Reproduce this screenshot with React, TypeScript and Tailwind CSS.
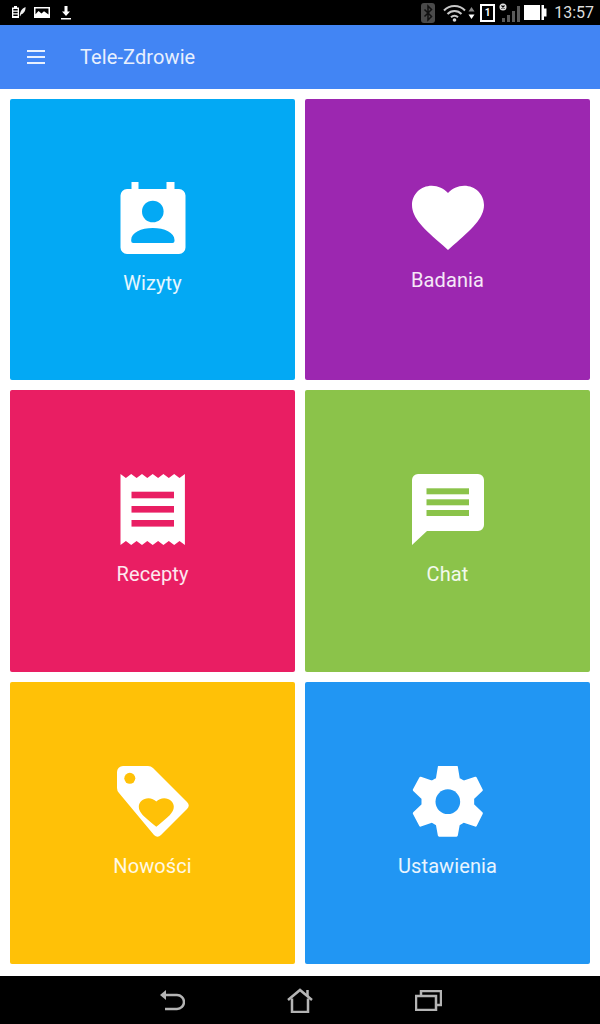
const HEART =
  "M12 21.35l-1.45-1.32C5.4 15.36 2 12.28 2 8.5 2 5.42 4.42 3 7.5 3c1.74 0 3.41.81 4.5 2.09C13.09 3.81 14.76 3 16.5 3 19.58 3 22 5.42 22 8.5c0 3.78-3.4 6.86-8.55 11.54L12 21.35z";

function TileIcon({ children }: { children: React.ReactNode }) {
  return (
    <svg width="72" height="72" viewBox="0 0 72 72" className="block shrink-0">
      {children}
    </svg>
  );
}

function ContactIcon() {
  return (
    <TileIcon>
      <path
        fill="#fff"
        d="M14.500 0h7v7h28V0h8v7H62a6.500 6.500 0 0 1 6.500 6.500v52A6.500 6.500 0 0 1 62 72H10a6.500 6.500 0 0 1-6.500-6.500v-52A6.500 6.500 0 0 1 10 7h4.500z"
      />
      <circle cx="35.800" cy="29.500" r="10.800" fill="#03a9f4" />
      <path
        fill="#03a9f4"
        d="M14.200 58c0-7.500 10-12 21.600-12s21.700 4.500 21.700 12v1a2 2 0 0 1-2 2H16.200a2 2 0 0 1-2-2z"
      />
    </TileIcon>
  );
}

function HeartIcon() {
  return (
    <TileIcon>
      <path fill="#fff" transform="translate(-7.200,-4.800) scale(3.600,3.500)" d={HEART} />
    </TileIcon>
  );
}

function ReceiptIcon() {
  return (
    <TileIcon>
      <path
        fill="#fff"
        d="M3.500 0l5.400 4 5.300-4 5.400 4 5.400-4 5.300 4 5.400-4 5.400 4 5.300-4 5.400 4 5.400-4 5.300 4 5.400-4v71l-5.400-4-5.300 4-5.400-4-5.400 4-5.300-4-5.400 4-5.400-4-5.300 4-5.400-4-5.400 4-5.300-4-5.400 4z"
      />
      <rect x="14.500" y="17.700" width="42.500" height="6.600" fill="#e91e63" />
      <rect x="14.500" y="32" width="42.500" height="6.600" fill="#e91e63" />
      <rect x="14.500" y="46" width="42.500" height="6.600" fill="#e91e63" />
    </TileIcon>
  );
}

function ChatIcon() {
  return (
    <TileIcon>
      <path
        fill="#fff"
        d="M6 0h60a6 6 0 0 1 6 6v45a6 6 0 0 1-6 6H15L0 71V6a6 6 0 0 1 6-6z"
      />
      <rect x="14.500" y="14.300" width="42.500" height="6" fill="#8bc34a" />
      <rect x="14.500" y="25.300" width="42.500" height="6" fill="#8bc34a" />
      <rect x="14.500" y="36" width="42.500" height="6" fill="#8bc34a" />
    </TileIcon>
  );
}

function TagIcon() {
  return (
    <TileIcon>
      <path
        fill="#fff"
        d="M6 0h25q3 0 5 2l34 34q3.500 3.500 0 7L44 69q-3.500 3.500-7 0L2 27q-2-2-2-5V6a6 6 0 0 1 6-6z"
      />
      <circle cx="12.800" cy="12.300" r="5.500" fill="#ffc107" />
      <path fill="#ffc107" transform="translate(18.300,27.650) scale(1.750,1.550)" d={HEART} />
    </TileIcon>
  );
}

function GearIcon() {
  return (
    <TileIcon>
      <g transform="translate(-16.500,-11) scale(0.3333)">
        <polygon
          fill="#fff"
          stroke="#fff"
          strokeWidth="8"
          strokeLinejoin="round"
          points="131,36 183,36 189,72 204,81 240,69 258,105 232,130 232,150 258,175 240,211 204,199 189,208 183,241 131,241 125,208 110,199 75,211 56,175 82,150 82,130 56,105 75,69 110,81 125,72"
        />
        <circle cx="157" cy="140" r="37" fill="#2196f3" />
      </g>
    </TileIcon>
  );
}

const tiles = [
  { label: "Wizyty", bg: "bg-[#03a9f4]", icon: <ContactIcon />, pad: "pb-[2px]", gap: "mt-[17px]" },
  { label: "Badania", bg: "bg-[#9c27b0]", icon: <HeartIcon />, pad: "pb-[7px]", gap: "mt-[16px]" },
  { label: "Recepty", bg: "bg-[#e91e63]", icon: <ReceiptIcon />, pad: "pb-[2px]", gap: "mt-[16px]" },
  { label: "Chat", bg: "bg-[#8bc34a]", icon: <ChatIcon />, pad: "pb-[2px]", gap: "mt-[16px]" },
  { label: "Nowości", bg: "bg-[#ffc107]", icon: <TagIcon />, pad: "pb-[2px]", gap: "mt-[16px]" },
  { label: "Ustawienia", bg: "bg-[#2196f3]", icon: <GearIcon />, pad: "pb-[2px]", gap: "mt-[16px]" },
];

function StatusBar() {
  return (
    <div className="flex h-[25px] items-center bg-black pl-[11px] pr-[6px]">
      {/* notification icons */}
      <svg width="15" height="13" viewBox="0 0 15 13" className="block">
        <path
          fill="#fff"
          fillRule="evenodd"
          d="M3 0h3v1.500h2V12H1V1.500h2zM2.300 3v1.500h4.400V3zm0 2.800v1.500h4.400V5.800zm0 2.800v1.500h4.400V8.600z"
        />
        <path fill="#eee" d="M14.500 1c.3 3.500-1.500 6.500-4.500 7.500l-.7 1.800-.5-.3C9 6 10.500 2.500 14.500 1z" />
      </svg>
      <svg width="16" height="11" viewBox="0 0 16 11" className="ml-[8px] block">
        <path
          fill="#fff"
          fillRule="evenodd"
          d="M0 0h16v11H0zM1.500 1.500v5.800L4.500 4l3 2.500L10 4.200l4.500 3.300v-6z"
        />
      </svg>
      <svg width="12" height="14" viewBox="0 0 12 14" className="ml-[10px] block">
        <path fill="#fff" d="M4.500 0h3v5.500H10L6 10 2 5.500h2.500zM1 12h10v1.500H1z" />
      </svg>

      {/* system icons */}
      <div className="ml-auto flex items-center">
        <svg width="14" height="20" viewBox="0 0 14 20" className="block">
          <rect width="14" height="20" rx="3" fill="#4a4a4a" />
          <path fill="none" stroke="#111" strokeWidth="1.500" d="M3.500 6.500l7 7L7 17V3l3.500 3.500-7 7" />
        </svg>
        <svg width="23" height="18" viewBox="0 0 23 18" className="ml-[8px] block">
          <path
            fill="none"
            stroke="#c8c8c8"
            strokeWidth="2"
            d="M1 6.500a14.500 14.500 0 0 1 21 0M4.500 10a9.500 9.500 0 0 1 14 0M8 13.300a5 5 0 0 1 7 0"
          />
          <circle cx="11.500" cy="16" r="1.800" fill="#d8d8d8" />
        </svg>
        <svg width="7" height="12" viewBox="0 0 7 12" className="ml-[2px] block">
          <path fill="#888" d="M3.500 0L6.500 4.500H.5z" />
          <path fill="#fff" d="M3.500 12L.5 7.500h6z" />
        </svg>
        <div className="ml-[5px] flex h-[18px] w-[15px] items-center justify-center border-2 border-white bg-black">
          <span className="font-['Roboto',sans-serif] text-[10px] leading-none font-bold text-white">
            1
          </span>
        </div>
        <svg width="21" height="20" viewBox="0 0 21 20" className="ml-[4px] block">
          <circle cx="4" cy="4" r="3.500" fill="#e0e0e0" />
          <path stroke="#000" strokeWidth="1.200" d="M2.500 2.500l3 3m0-3l-3 3" />
          <rect x="3" y="15" width="3" height="4" fill="#5a5a5a" />
          <rect x="8" y="12" width="3" height="7" fill="#5a5a5a" />
          <rect x="13" y="8" width="3" height="11" fill="#5a5a5a" />
          <rect x="18" y="3" width="3" height="16" fill="#5a5a5a" />
        </svg>
        <svg width="23" height="15" viewBox="0 0 23 15" className="ml-[4px] block">
          <path fill="#fff" d="M0 0h16v15H0zM17.500 0H20v3.500h2.500v8H20V15h-2.500z" />
        </svg>
        <span className="ml-[7px] font-['Roboto',sans-serif] text-[16px] leading-none text-[#dddddd]">
          13:57
        </span>
      </div>
    </div>
  );
}

function AppBar() {
  return (
    <div className="flex h-[64px] items-center bg-[#4285f4] pl-[27px]">
      <div className="flex w-[18px] flex-col gap-[4px]">
        <div className="h-[2px] bg-[#e8f0fe]" />
        <div className="h-[2px] bg-[#e8f0fe]" />
        <div className="h-[2px] bg-[#e8f0fe]" />
      </div>
      <span className="ml-[35px] font-['Roboto',sans-serif] text-[20px] tracking-[0.1px] text-[#e8f0fe]">
        Tele-Zdrowie
      </span>
    </div>
  );
}

function NavBar() {
  return (
    <div className="flex h-[48px] items-center justify-center bg-black">
      <div className="flex w-[128px] justify-center">
        <svg width="26" height="24" viewBox="0 0 26 24" fill="none" stroke="#b4b4b4" strokeWidth="2.500">
          <path d="M6 7h12a6.500 6.500 0 0 1 0 14H6" />
          <path fill="#b4b4b4" stroke="none" d="M1 7l6-5v10z" />
        </svg>
      </div>
      <div className="flex w-[128px] justify-center">
        <svg width="26" height="25" viewBox="0 0 26 25" fill="none" stroke="#b4b4b4" strokeWidth="2.500">
          <path d="M1 12L13 2l12 10" />
          <path d="M5 10.500V24h16V10.500" />
          <path d="M20.500 2v6" />
        </svg>
      </div>
      <div className="flex w-[128px] justify-center">
        <svg width="27" height="21" viewBox="0 0 27 21" fill="none" stroke="#b4b4b4" strokeWidth="2.500">
          <rect x="1" y="6" width="20" height="14" />
          <path d="M6 6V1h20v14h-5" />
        </svg>
      </div>
    </div>
  );
}

export default function App() {
  return (
    <div className="flex h-[1024px] w-[600px] flex-col overflow-hidden bg-white">
      <StatusBar />
      <AppBar />

      <div className="grid flex-1 grid-cols-2 grid-rows-[281px_282px_282px] gap-[10px] px-[10px] pt-[10px]">
        {tiles.map((tile) => (
          <div
            key={tile.label}
            className={`flex flex-col items-center justify-center rounded-[2px] ${tile.bg} ${tile.pad}`}
          >
            {tile.icon}
            <span
              className={`${tile.gap} font-['Roboto',sans-serif] text-[20px] leading-[24px] tracking-[0.1px] text-white/90`}
            >
              {tile.label}
            </span>
          </div>
        ))}
      </div>

      <NavBar />
    </div>
  );
}
